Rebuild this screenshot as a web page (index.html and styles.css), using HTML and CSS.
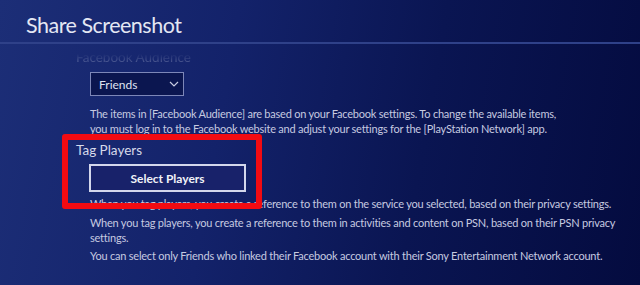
FILE: index.html
```html
<!DOCTYPE html>
<html>
    <head>
        <meta charset="UTF-8">
        <title>Share Screenshot</title>
        <link rel="stylesheet" href="styles.css">
    </head>
    <body>
        <div class="header">
            <h1 class="title">Share Screenshot</h1>
        </div>
        <div class="main">
            <div class="section faded">
                <div class="label">Facebook Audience</div>
            </div>
            <div class="section">
                <div class="field">
                    <div class="dropdown">
                        <span>Friends</span>
                        <svg class="chevron" width="10" height="6" viewBox="0 0 10 6">
                            <polyline points="1,1 5,5 9,1" fill="none" stroke="#c8cce2" stroke-width="1.2"/>
                        </svg>
                    </div>
                    <p class="note first">The items in [Facebook Audience] are based on your Facebook settings. To change the available items,<br>you must log in to the Facebook website and adjust your settings for the [PlayStation Network] app.</p>
                </div>
            </div>
            <div class="section">
                <div class="label">Tag Players</div>
                <div class="field">
                    <button class="select_btn">Select Players</button>
                    <p class="note">When you tag players, you create a reference to them on the service you selected, based on their privacy settings.</p>
                    <p class="note">When you tag players, you create a reference to them in activities and content on PSN, based on their PSN privacy settings.</p>
                    <p class="note">You can select only Friends who linked their Facebook account with their Sony Entertainment Network account.</p>
                </div>
            </div>
        </div>
        <div class="highlight"></div>
    </body>
</html>
```

FILE: styles.css
```css
html, body{
    margin: 0;
    height: 100%;
}
body{
    position: relative;
    overflow: hidden;
    font-family: 'Lato', 'Open Sans', sans-serif;
    color: #c6cae0;
    background: linear-gradient(100deg, #1c2e77 0%, #13226a 35%, #0a1552 65%, #040b3f 100%);
}
.header{
    height: 44px;
    box-sizing: border-box;
    padding: 12px 0 0 26px;
    border-bottom: 2px solid #2f4189;
}
.title{
    margin: 0;
    font-size: 21.5px;
    font-weight: normal;
    letter-spacing: -0.5px;
    line-height: 26px;
    color: #e4e7f3;
}
.main{
    padding: 0 0 0 76px;
}
.faded{
    height: 28px;
    overflow: hidden;
    opacity: 0.35;
    -webkit-mask-image: linear-gradient(to bottom, transparent 35%, black 75%);
    mask-image: linear-gradient(to bottom, transparent 35%, black 75%);
}
.faded .label{
    margin-top: 4px;
}
.label{
    font-size: 13.5px;
    line-height: 18px;
    color: #d6d9ea;
}
.field{
    margin-left: 14px;
    width: 530px;
}
.dropdown{
    width: 94px;
    height: 24px;
    box-sizing: border-box;
    border: 1px solid #7d87b8;
    background-color: #0b1650;
    display: flex;
    align-items: center;
    justify-content: space-between;
    padding: 0 4px 0 8px;
    font-size: 12px;
    color: #dfe2f0;
}
.chevron{
    display: block;
}
.note{
    margin: 3.5px 0 0 0;
    font-size: 11px;
    letter-spacing: -0.22px;
    line-height: 15px;
}
.note.first{
    margin-top: 10px;
    margin-bottom: 5px;
}
.select_btn{
    display: block;
    margin: 5px 0 4px -1px;
    width: 157px;
    height: 28px;
    border: 2px solid #d3d7ec;
    background-color: #18226a;
    color: #f1f2f8;
    font-family: 'Lato', 'Open Sans', sans-serif;
    font-size: 12px;
    font-weight: bold;
    padding: 0;
}
.highlight{
    position: absolute;
    left: 62px;
    top: 134px;
    width: 200px;
    height: 75px;
    box-sizing: border-box;
    border: 6px solid #f20b12;
    border-radius: 3px;
}
```
